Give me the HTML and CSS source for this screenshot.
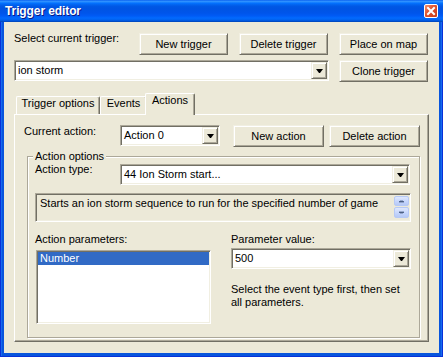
FILE: index.html
```html
<!DOCTYPE html>
<html>
<head>
<meta charset="utf-8">
<title>Trigger editor</title>
<link rel="stylesheet" href="styles.css">
</head>
<body>
<div class="window">
  <div class="titlebar">
    <span class="title">Trigger editor</span>
    <span class="close">
      <svg width="12" height="12" viewBox="0 0 12 12"><path d="M3 3 L9 9 M9 3 L3 9" stroke="#fff" stroke-width="2" stroke-linecap="square"/></svg>
    </span>
  </div>
  <div class="client">
    <div class="row row1">
      <span class="label sel-label">Select current trigger:</span>
      <button class="btn">New trigger</button>
      <button class="btn">Delete trigger</button>
      <button class="btn">Place on map</button>
    </div>
    <div class="row row2">
      <div class="combo trig-combo"><span class="combo-text">ion storm</span><span class="drop"></span></div>
      <button class="btn">Clone trigger</button>
    </div>
    <div class="tabs">
      <div class="tab t1">Trigger options</div>
      <div class="tab t2">Events</div>
      <div class="tab active">Actions</div>
    </div>
    <div class="panel">
      <div class="row arow">
        <span class="label cur-label">Current action:</span>
        <div class="combo act-combo"><span class="combo-text">Action 0</span><span class="drop"></span></div>
        <button class="btn abtn new-action">New action</button>
        <button class="btn abtn del-action">Delete action</button>
      </div>
      <fieldset class="group">
        <legend>Action options</legend>
        <div class="row typerow">
          <span class="label type-label">Action type:</span>
          <div class="combo type-combo"><span class="combo-text">44 Ion Storm start...</span><span class="drop"></span></div>
        </div>
        <div class="desc">
          <span class="desc-text">Starts an ion storm sequence to run for the specified number of game</span>
          <div class="spin">
            <span class="sb"><svg width="7" height="4" viewBox="0 0 7 4"><path d="M1 3 L6 3 L5 2 L2 2 Z" fill="#4d6185" stroke="#4d6185" stroke-width="0.8"/></svg></span>
            <span class="sb"><svg width="7" height="4" viewBox="0 0 7 4"><path d="M1 1 L6 1 L5 2 L2 2 Z" fill="#4d6185" stroke="#4d6185" stroke-width="0.8"/></svg></span>
          </div>
        </div>
        <div class="params">
          <div class="pcol pleft">
            <span class="label">Action parameters:</span>
            <div class="list"><div class="item sel">Number</div></div>
          </div>
          <div class="pcol pright">
            <span class="label">Parameter value:</span>
            <div class="combo val-combo"><span class="combo-text">500</span><span class="drop"></span></div>
            <p class="note">Select the event type first, then set<br>all parameters.</p>
          </div>
        </div>
      </fieldset>
    </div>
  </div>
</div>
</body>
</html>
```

FILE: styles.css
```css
* { box-sizing: border-box; }

html, body {
  margin: 0;
  padding: 0;
  background: #0a53df;
}

body {
  font-family: "Liberation Sans", Arial, sans-serif;
  font-size: 11px;
  line-height: 13px;
  color: #000;
}

.window {
  width: 443px;
  height: 357px;
  display: flex;
  flex-direction: column;
  background: #0855dd;
  box-shadow: inset 1px 0 0 #0831d9, inset -1px 0 0 #0831d9, inset 0 -1px 0 #0831d9, inset 2px 0 0 #166aee, inset -2px 0 0 #166aee;
}

.titlebar {
  height: 22px;
  flex: none;
  display: flex;
  align-items: center;
  justify-content: space-between;
  padding: 0 5px 0 5px;
  background: linear-gradient(to bottom, #0058ee 0%, #3593ff 5%, #288eff 8%, #127dff 12%, #036ffc 16%, #0262ee 22%, #0057e5 30%, #0054e3 40%, #0055eb 60%, #005bf5 72%, #026afe 82%, #0062ef 90%, #0052d6 96%, #0040ab 100%);
}

.title {
  color: #fff;
  font-weight: bold;
  font-size: 12px;
  letter-spacing: -0.1px;
  text-shadow: 1px 1px 0 #0a1883;
}

.close {
  width: 14px;
  height: 14px;
  display: flex;
  align-items: center;
  justify-content: center;
  border: 1px solid #fff;
  border-radius: 2px;
  background: linear-gradient(135deg, #f0906f 0%, #e0502c 45%, #c53c1a 100%);
}

.client {
  flex: 1;
  margin: 0 4px 4px 4px;
  background: #ece9d8;
  padding: 11px 10px 0 10px;
  display: flex;
  flex-direction: column;
}

.row {
  display: flex;
  align-items: flex-start;
}

.label {
  white-space: nowrap;
}

/* Raised classic button */
.btn {
  font: inherit;
  color: #000;
  padding: 0;
  margin: 0;
  height: 22px;
  width: 89px;
  background: #ece9d8;
  border: 1px solid;
  border-color: #f1efe2 #716f64 #716f64 #f1efe2;
  box-shadow: inset 1px 1px 0 #fff, inset -1px -1px 0 #aca899;
  text-align: center;
  white-space: nowrap;
}

.row1 { height: 22px; }
.sel-label { width: 125px; margin-top: -1px; }
.row1 .btn + .btn { margin-left: 11px; }

.row2 { margin-top: 5px; }
.row2 .btn { margin-left: 10px; }

/* Sunken combo box */
.combo {
  display: flex;
  align-items: stretch;
  height: 21px;
  background: #fff;
  border: 1px solid;
  border-color: #aca899 #fff #fff #aca899;
  box-shadow: inset 1px 1px 0 #716f64, inset -1px -1px 0 #f1efe2;
}

.combo-text {
  flex: 1;
  padding-left: 3px;
  line-height: 19px;
  white-space: nowrap;
  overflow: hidden;
}

.drop {
  width: 16px;
  margin: 1px 1px 1px 0;
  background: #ece9d8;
  border: 1px solid;
  border-color: #f1efe2 #716f64 #716f64 #f1efe2;
  box-shadow: inset 1px 1px 0 #fff, inset -1px -1px 0 #aca899;
  display: flex;
  align-items: center;
  justify-content: center;
}

.drop::after {
  content: "";
  width: 1px;
  height: 0;
  border-left: 3px solid transparent;
  border-right: 3px solid transparent;
  border-top: 4px solid #000;
  margin-top: 1px;
}

.trig-combo { width: 315px; }

/* Tabs */
.tabs {
  margin-top: 11px;
  height: 22px;
  display: flex;
  align-items: flex-start;
  padding-left: 2px;
  margin-bottom: -1px;
  position: relative;
  z-index: 1;
}

.tab {
  margin-top: 3px;
  height: 18px;
  background: #ece9d8;
  border-top: 1px solid #fff;
  border-left: 1px solid #fff;
  border-right: 1px solid #716f64;
  box-shadow: inset -1px 0 0 #aca899;
  border-radius: 2px 2px 0 0;
  text-align: center;
  line-height: 11px;
  padding-top: 1px;
  white-space: nowrap;
}

.t1 { width: 84px; }
.t2 { width: 47px; }

.tab.active {
  margin: 0 -2px 0 -2px;
  height: 22px;
  width: 50px;
  line-height: 13px;
  padding-top: 0;
}

/* Tab panel */
.panel {
  height: 228px;
  background: #ece9d8;
  border: 1px solid;
  border-color: #fff #716f64 #716f64 #fff;
  box-shadow: inset -1px -1px 0 #aca899;
  padding: 10px 8px 0 9px;
}

.arow { height: 22px; }
.cur-label { width: 96px; margin-top: 0; }
.act-combo { width: 100px; }
.abtn { width: 91px; }
.new-action { margin-left: 13px; }
.del-action { margin-left: 5px; }

/* Group box */
.group {
  margin: 3px 0 0 3px;
  width: 393px;
  height: 188px;
  border: 1px solid #aca899;
  box-shadow: inset 1px 1px 0 #fff, 1px 1px 0 #fff;
  padding: 0 8px 0 7px;
  min-width: 0;
}

.group legend {
  padding: 0 2px;
  margin-left: -2px;
  background: #ece9d8;
  line-height: 13px;
}

.typerow { margin-top: 1px; height: 21px; }
.type-label { width: 85px; margin-top: -1px; }
.type-combo { width: 290px; }

.desc {
  margin-top: 8px;
  width: 376px;
  height: 29px;
  display: flex;
  align-items: flex-start;
  border: 1px solid;
  border-color: #aca899 #fff #fff #aca899;
  box-shadow: inset 1px 1px 0 #716f64, inset -1px -1px 0 #f1efe2;
  padding: 2px 1px 0 4px;
}

.desc-text {
  flex: 1;
  margin-top: 1px;
  white-space: nowrap;
  overflow: hidden;
}

.spin {
  display: flex;
  flex-direction: column;
  gap: 1px;
  margin-left: 4px;
}

.sb {
  width: 15px;
  height: 10px;
  display: flex;
  align-items: center;
  justify-content: center;
  border: 1px solid #b6c9f5;
  border-radius: 2px;
  background: linear-gradient(to bottom, #dfe8fd 0%, #c3d4fc 60%, #b6c9f5 100%);
}

.sb + .sb { height: 11px; }

.params {
  margin-top: 11px;
  display: flex;
}

.pcol {
  display: flex;
  flex-direction: column;
  align-items: flex-start;
}

.pleft { width: 197px; }
.pright { width: 180px; }

.list {
  margin: 4px 0 0 1px;
  width: 175px;
  height: 74px;
  background: #fff;
  border: 1px solid;
  border-color: #aca899 #fff #fff #aca899;
  box-shadow: inset 1px 1px 0 #716f64, inset -1px -1px 0 #f1efe2;
  padding: 1px 1px 0 1px;
}

.item {
  height: 13px;
  line-height: 13px;
  padding-left: 2px;
}

.item.sel {
  background: #316ac5;
  color: #fff;
}

.val-combo {
  margin-top: 2px;
  width: 180px;
}

.note {
  margin: 14px 0 0 0;
  line-height: 13px;
}
```
